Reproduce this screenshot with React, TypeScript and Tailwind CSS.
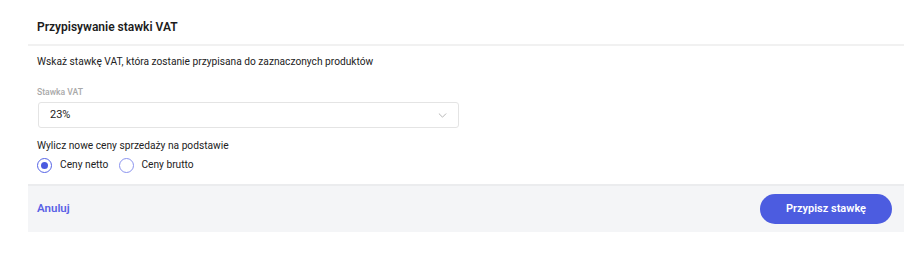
import React from "react";

export default function App() {
  return (
    <div className="w-[920px] h-[259px] bg-white" style={{ fontFamily: "Roboto, 'Noto Sans', sans-serif" }}>
      <div className="ml-[28px] w-[876px] flex flex-col">
        <div className="pt-[19px] pb-[9px] pl-[9px] border-b-2 border-[#f1f1f1]">
          <div className="text-[12px] leading-[16px] font-semibold text-[#1c1c1c]">Przypisywanie stawki VAT</div>
        </div>
        <div className="pl-[9px] pr-[10px] pt-[8px] pb-[11px] flex flex-col">
          <div className="text-[10.2px] leading-[16px] text-[#222]">Wskaż stawkę VAT, która zostanie przypisana do zaznaczonych produktów</div>
          <div className="mt-[16px] text-[8.6px] leading-[12px] text-[#a9a9a9] font-medium">Stawka VAT</div>
          <div className="mt-[4px] ml-[1px] w-[421px] h-[26px] border border-[#e4e4e4] rounded-[3px] flex items-center justify-between pl-[11px] pr-[11px]">
            <span className="text-[11px] text-[#1c1c1c]">23%</span>
            <svg width="9" height="5" viewBox="0 0 10 6" fill="none">
              <path d="M1 1l4 4 4-4" stroke="#b0b0b0" strokeWidth="1.1" strokeLinecap="round" strokeLinejoin="round" />
            </svg>
          </div>
          <div className="mt-[10px] text-[10.2px] leading-[16px] text-[#222]">Wylicz nowe ceny sprzedaży na podstawie</div>
          <div className="mt-[3px] flex items-center h-[16px]">
            <div className="w-[15px] h-[15px] rounded-full border-[1.5px] border-[#5563e6] flex items-center justify-center">
              <div className="w-[7px] h-[7px] rounded-full bg-[#4b5be0]" />
            </div>
            <span className="ml-[8px] text-[10.2px] text-[#222]">Ceny netto</span>
            <div className="ml-[11px] w-[15px] h-[15px] rounded-full border-[1.5px] border-[#8a93ee]" />
            <span className="ml-[7px] text-[10.2px] text-[#222]">Ceny brutto</span>
          </div>
        </div>
        <div className="h-[48px] bg-[#f4f5f7] border-t-2 border-[#ebecee] flex items-center justify-between pl-[9px] pr-[12px]">
          <span className="text-[11.5px] font-semibold text-[#5a62e6]">Anuluj</span>
          <button className="w-[132px] h-[30px] rounded-full bg-[#4c5ce0] text-white text-[11px] font-semibold">Przypisz stawkę</button>
        </div>
      </div>
    </div>
  );
}
